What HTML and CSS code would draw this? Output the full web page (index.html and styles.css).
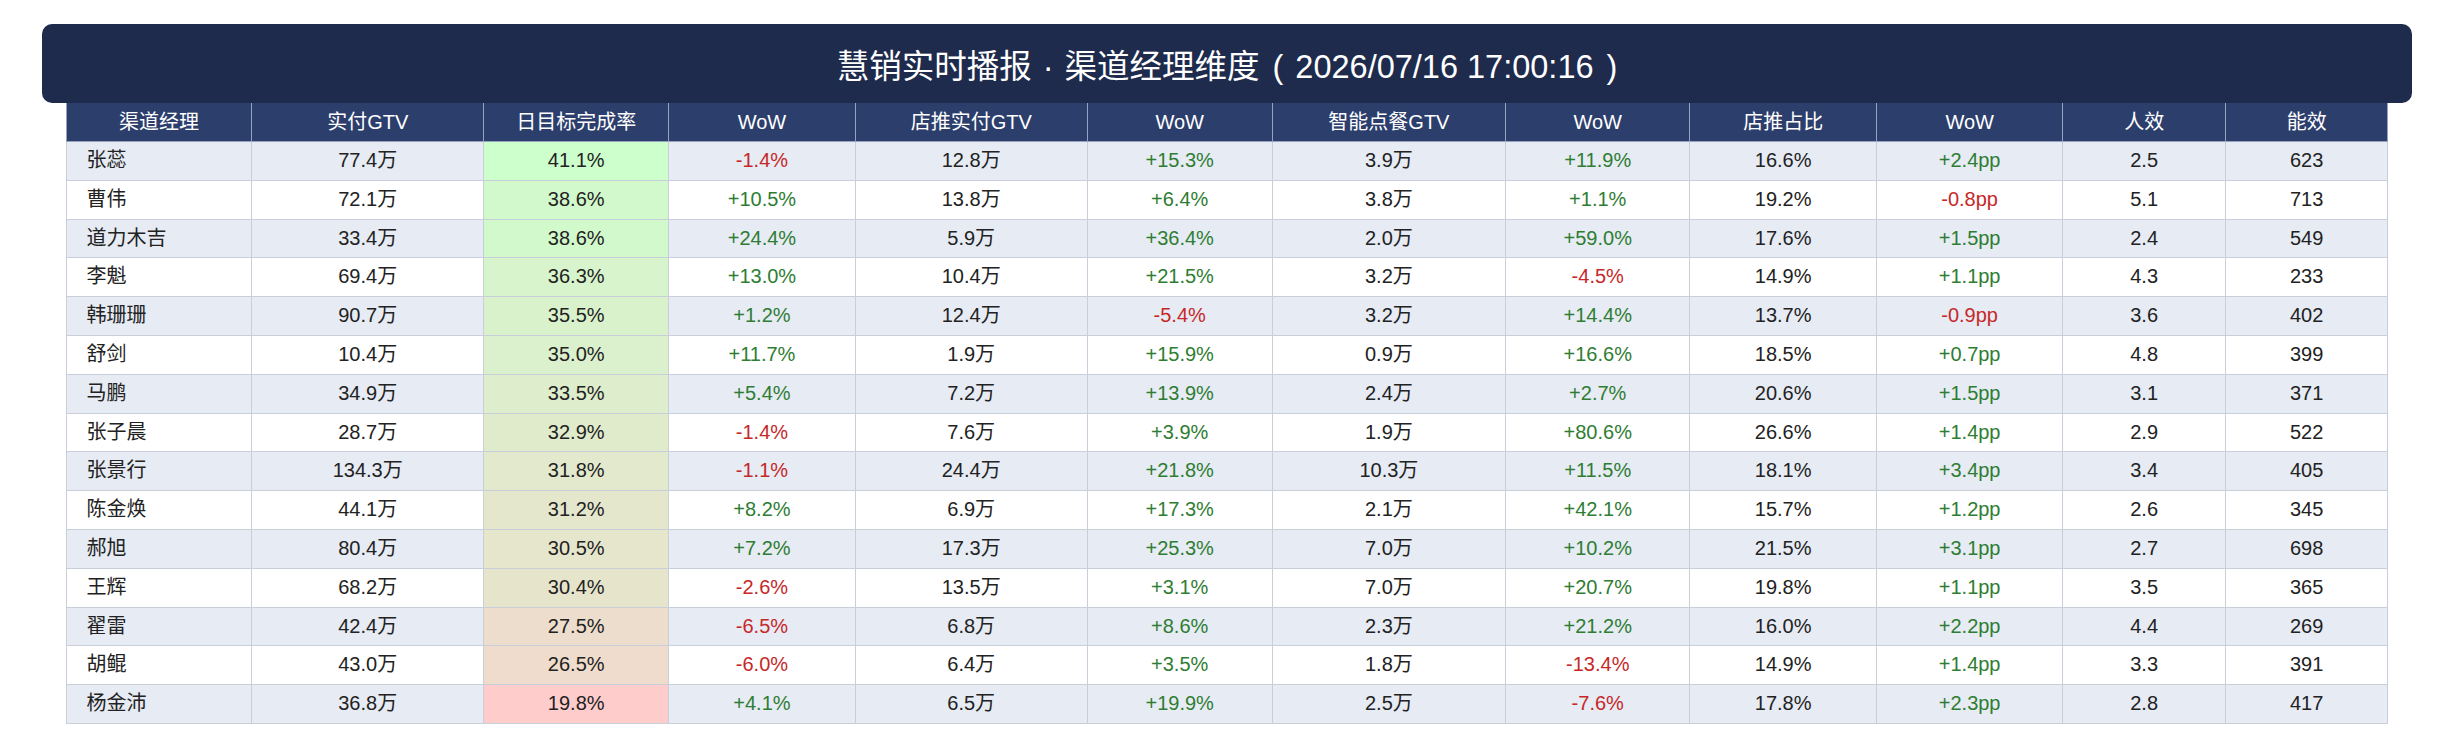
FILE: index.html
```html
<!DOCTYPE html>
<html lang="zh-CN">
<head>
<meta charset="utf-8">
<title>慧销实时播报</title>
<link rel="stylesheet" href="styles.css">
</head>
<body>
<div class="report">
  <div class="report-title"><span class="title-text">慧销实时播报<span class="title-sep">·</span>渠道经理维度<span class="title-open">(</span>2026/07/16 17:00:16<span class="title-close">)</span></span></div>
  <table class="grid">
    <colgroup>
      <col class="w-name"><col class="w-wide"><col class="w-mid"><col class="w-mid2">
      <col class="w-wide"><col class="w-mid"><col class="w-wide2"><col class="w-mid3">
      <col class="w-mid2"><col class="w-mid2"><col class="w-small"><col class="w-small">
    </colgroup>
    <thead>
      <tr><th>渠道经理</th><th>实付GTV</th><th>日目标完成率</th><th>WoW</th><th>店推实付GTV</th><th>WoW</th><th>智能点餐GTV</th><th>WoW</th><th>店推占比</th><th>WoW</th><th>人效</th><th>能效</th></tr>
    </thead>
    <tbody>
      <tr><td class="name">张蕊</td><td>77.4万</td><td class="rate" style="background:rgb(204,255,204)">41.1%</td><td class="neg">-1.4%</td><td>12.8万</td><td class="pos">+15.3%</td><td>3.9万</td><td class="pos">+11.9%</td><td>16.6%</td><td class="pos">+2.4pp</td><td>2.5</td><td>623</td></tr>
      <tr><td class="name">曹伟</td><td>72.1万</td><td class="rate" style="background:rgb(210,249,204)">38.6%</td><td class="pos">+10.5%</td><td>13.8万</td><td class="pos">+6.4%</td><td>3.8万</td><td class="pos">+1.1%</td><td>19.2%</td><td class="neg">-0.8pp</td><td>5.1</td><td>713</td></tr>
      <tr><td class="name">道力木吉</td><td>33.4万</td><td class="rate" style="background:rgb(210,249,204)">38.6%</td><td class="pos">+24.4%</td><td>5.9万</td><td class="pos">+36.4%</td><td>2.0万</td><td class="pos">+59.0%</td><td>17.6%</td><td class="pos">+1.5pp</td><td>2.4</td><td>549</td></tr>
      <tr><td class="name">李魁</td><td>69.4万</td><td class="rate" style="background:rgb(215,244,204)">36.3%</td><td class="pos">+13.0%</td><td>10.4万</td><td class="pos">+21.5%</td><td>3.2万</td><td class="neg">-4.5%</td><td>14.9%</td><td class="pos">+1.1pp</td><td>4.3</td><td>233</td></tr>
      <tr><td class="name">韩珊珊</td><td>90.7万</td><td class="rate" style="background:rgb(217,242,204)">35.5%</td><td class="pos">+1.2%</td><td>12.4万</td><td class="neg">-5.4%</td><td>3.2万</td><td class="pos">+14.4%</td><td>13.7%</td><td class="neg">-0.9pp</td><td>3.6</td><td>402</td></tr>
      <tr><td class="name">舒剑</td><td>10.4万</td><td class="rate" style="background:rgb(219,240,204)">35.0%</td><td class="pos">+11.7%</td><td>1.9万</td><td class="pos">+15.9%</td><td>0.9万</td><td class="pos">+16.6%</td><td>18.5%</td><td class="pos">+0.7pp</td><td>4.8</td><td>399</td></tr>
      <tr><td class="name">马鹏</td><td>34.9万</td><td class="rate" style="background:rgb(222,237,204)">33.5%</td><td class="pos">+5.4%</td><td>7.2万</td><td class="pos">+13.9%</td><td>2.4万</td><td class="pos">+2.7%</td><td>20.6%</td><td class="pos">+1.5pp</td><td>3.1</td><td>371</td></tr>
      <tr><td class="name">张子晨</td><td>28.7万</td><td class="rate" style="background:rgb(224,235,204)">32.9%</td><td class="neg">-1.4%</td><td>7.6万</td><td class="pos">+3.9%</td><td>1.9万</td><td class="pos">+80.6%</td><td>26.6%</td><td class="pos">+1.4pp</td><td>2.9</td><td>522</td></tr>
      <tr><td class="name">张景行</td><td>134.3万</td><td class="rate" style="background:rgb(226,233,204)">31.8%</td><td class="neg">-1.1%</td><td>24.4万</td><td class="pos">+21.8%</td><td>10.3万</td><td class="pos">+11.5%</td><td>18.1%</td><td class="pos">+3.4pp</td><td>3.4</td><td>405</td></tr>
      <tr><td class="name">陈金焕</td><td>44.1万</td><td class="rate" style="background:rgb(228,231,204)">31.2%</td><td class="pos">+8.2%</td><td>6.9万</td><td class="pos">+17.3%</td><td>2.1万</td><td class="pos">+42.1%</td><td>15.7%</td><td class="pos">+1.2pp</td><td>2.6</td><td>345</td></tr>
      <tr><td class="name">郝旭</td><td>80.4万</td><td class="rate" style="background:rgb(229,230,204)">30.5%</td><td class="pos">+7.2%</td><td>17.3万</td><td class="pos">+25.3%</td><td>7.0万</td><td class="pos">+10.2%</td><td>21.5%</td><td class="pos">+3.1pp</td><td>2.7</td><td>698</td></tr>
      <tr><td class="name">王辉</td><td>68.2万</td><td class="rate" style="background:rgb(230,229,204)">30.4%</td><td class="neg">-2.6%</td><td>13.5万</td><td class="pos">+3.1%</td><td>7.0万</td><td class="pos">+20.7%</td><td>19.8%</td><td class="pos">+1.1pp</td><td>3.5</td><td>365</td></tr>
      <tr><td class="name">翟雷</td><td>42.4万</td><td class="rate" style="background:rgb(237,221,204)">27.5%</td><td class="neg">-6.5%</td><td>6.8万</td><td class="pos">+8.6%</td><td>2.3万</td><td class="pos">+21.2%</td><td>16.0%</td><td class="pos">+2.2pp</td><td>4.4</td><td>269</td></tr>
      <tr><td class="name">胡鲲</td><td>43.0万</td><td class="rate" style="background:rgb(239,220,204)">26.5%</td><td class="neg">-6.0%</td><td>6.4万</td><td class="pos">+3.5%</td><td>1.8万</td><td class="neg">-13.4%</td><td>14.9%</td><td class="pos">+1.4pp</td><td>3.3</td><td>391</td></tr>
      <tr><td class="name">杨金沛</td><td>36.8万</td><td class="rate" style="background:rgb(255,204,204)">19.8%</td><td class="pos">+4.1%</td><td>6.5万</td><td class="pos">+19.9%</td><td>2.5万</td><td class="neg">-7.6%</td><td>17.8%</td><td class="pos">+2.3pp</td><td>2.8</td><td>417</td></tr>
    </tbody>
  </table>
</div>
</body>
</html>
```

FILE: styles.css
```css
html, body {
  margin: 0;
  padding: 0;
  background: #ffffff;
}

body {
  font-family: "Liberation Sans", "Noto Sans CJK SC", sans-serif;
  color: #222222;
}

.report {
  padding: 24px 41px 0 42px;
}

.report-title {
  height: 79px;
  display: flex;
  align-items: center;
  justify-content: center;
  background: #1e2b4c;
  color: #ffffff;
  font-size: 32.5px;
  border-radius: 10px;
}

.title-text {
  white-space: nowrap;
}

.title-sep {
  margin: 0 11px;
}

.title-open {
  margin: 0 12px 0 13px;
}

.title-close {
  margin-left: 13px;
}

.grid {
  width: 98%;
  margin: 0 auto;
  table-layout: fixed;
  border-collapse: collapse;
  font-size: 20px;
}

.w-name { width: 185.6px; }
.w-wide { width: 232px; }
.w-wide2 { width: 233.4px; }
.w-mid { width: 185px; }
.w-mid2 { width: 186.5px; }
.w-mid3 { width: 184.3px; }
.w-small { width: 162.5px; }

.grid th {
  background: #2c3e6c;
  color: #ffffff;
  font-weight: normal;
  padding: 7px 8px;
  line-height: 24px;
  border: 1px solid #95a3c0;
  border-top: none;
  text-align: center;
}

.grid td {
  padding: 7px 8px;
  line-height: 23.8px;
  border: 1px solid #c8cfdb;
  text-align: center;
  white-space: nowrap;
}

.grid tbody tr:nth-child(odd) {
  background: #e6ebf4;
}

.grid tbody tr:nth-child(even) {
  background: #ffffff;
}

.grid td.name {
  text-align: left;
  padding-left: 20px;
}

.grid td.neg {
  color: #c62828;
}

.grid td.pos {
  color: #2e7d32;
}
```
